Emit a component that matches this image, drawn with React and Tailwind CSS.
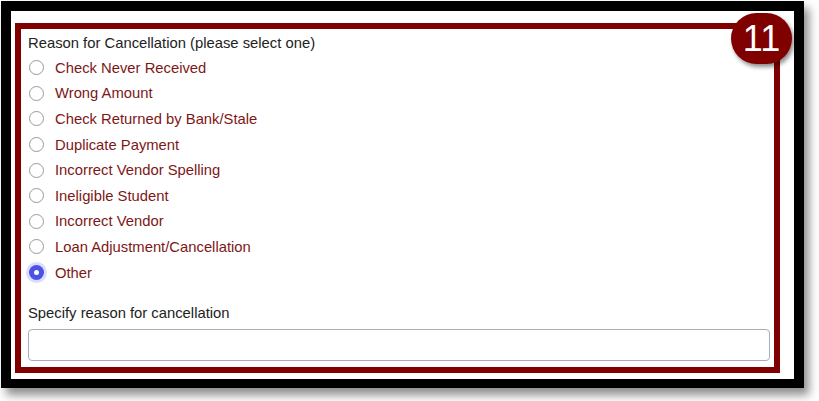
export default function App() {
  const items = [
    "Check Never Received",
    "Wrong Amount",
    "Check Returned by Bank/Stale",
    "Duplicate Payment",
    "Incorrect Vendor Spelling",
    "Ineligible Student",
    "Incorrect Vendor",
    "Loan Adjustment/Cancellation",
    "Other",
  ];
  return (
    <div className="w-[819px] h-[401px] bg-white pt-px pl-px" style={{ fontFamily: '"Liberation Sans", Arial, sans-serif' }}>
      <div className="relative w-[803px] h-[387px] border-[10px] border-b-[9px] border-black bg-white pt-[12px] pl-[4px] shadow-[5px_7px_9px_rgba(0,0,0,0.45)]">
        <div className="w-[765px] h-[350px] border-[6px] border-[#800000] pl-[7px] pr-[4px] pt-[2px]">
          <div className="h-[24px] leading-[24px] text-[14.8px] text-[#222]">Reason for Cancellation (please select one)</div>
          {items.map((t, i) => (
            <div key={t} className="h-[25.6px] flex items-center">
              {i === items.length - 1 ? (
                <span className="ml-[1px] w-[15px] h-[15px] rounded-full bg-[#4a53e6] flex items-center justify-center shadow-[0_0_0_3px_rgba(90,100,240,0.22)]">
                  <span className="w-[5px] h-[5px] rounded-full bg-white" />
                </span>
              ) : (
                <span className="ml-[1px] w-[15px] h-[15px] rounded-full border border-[#9a9a9a] bg-white" />
              )}
              <span className="ml-[11px] text-[14.8px] text-[#7d1717] leading-[20px]">{t}</span>
            </div>
          ))}
          <div className="mt-[15.6px] h-[24px] leading-[24px] text-[14.8px] text-[#222]">Specify reason for cancellation</div>
          <div className="mt-[4px] w-[742px] h-[32px] border border-[#a9adb8] rounded-[4px] bg-white" />
        </div>
        <div className="absolute left-[720px] top-[2px] w-[61px] h-[51px] rounded-full bg-[#800000] shadow-[2px_3px_4px_rgba(0,0,0,0.45)] flex items-center justify-center text-white text-[36px] leading-none" style={{ fontFamily: '"Liberation Sans", Arial, sans-serif' }}>
          11
        </div>
      </div>
    </div>
  );
}
